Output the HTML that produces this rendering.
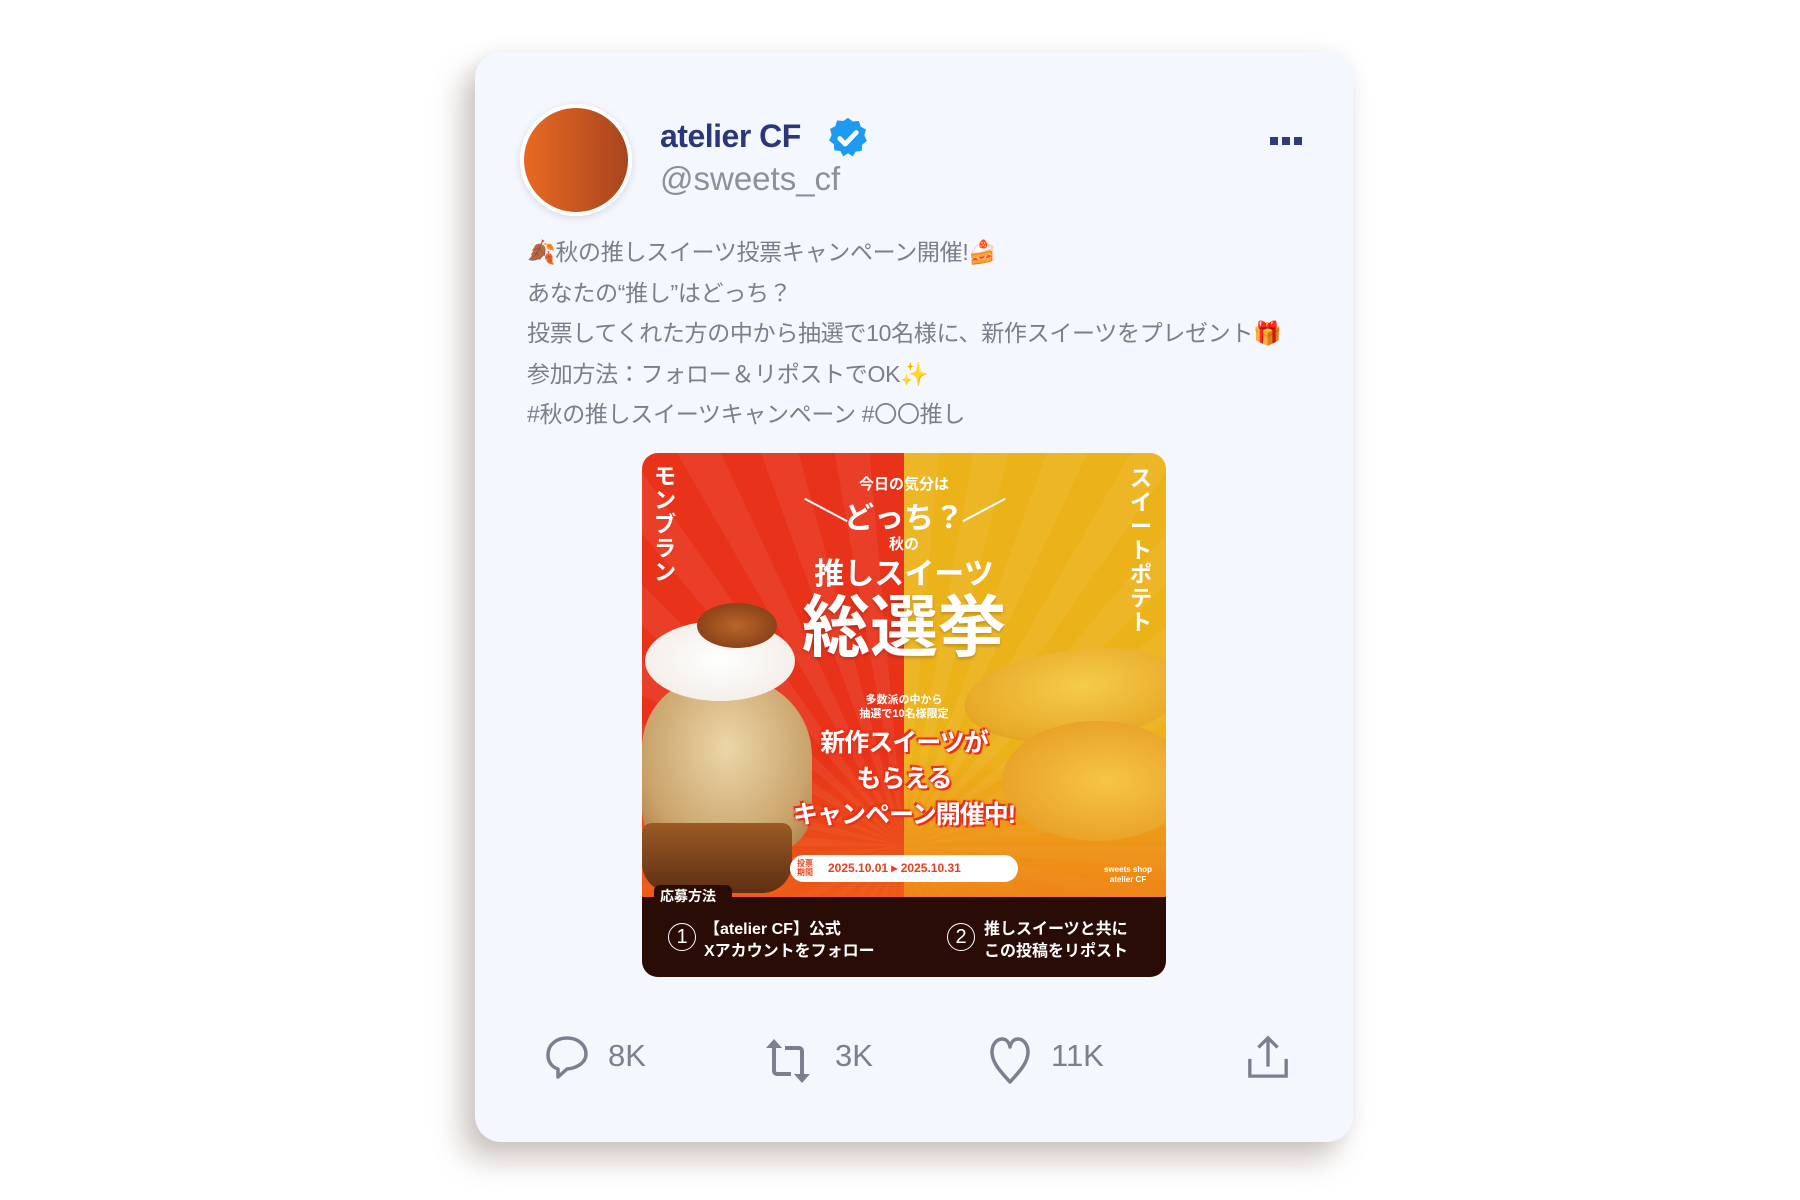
<!DOCTYPE html>
<html><head><meta charset="utf-8"><style>
*{margin:0;padding:0;box-sizing:border-box}
body{width:1800px;height:1200px;background:#fff;position:relative;overflow:hidden;font-family:"Liberation Sans","Noto Sans CJK JP",sans-serif}
.card{position:absolute;left:475px;top:52px;width:878px;height:1090px;background:#f4f7fe;border-radius:26px;box-shadow:-14px 18px 28px rgba(120,100,90,.35),0 0 20px rgba(0,0,0,.06)}
.abs{position:absolute}
.av{left:520px;top:104px;width:112px;height:112px;border-radius:50%;background:linear-gradient(90deg,#e86a22,#a8451f);border:4px solid #fff;box-shadow:0 2px 8px rgba(0,0,0,.12)}
.name{left:660px;top:118px;font-size:32px;font-weight:bold;color:#2b3878;letter-spacing:-.5px}
.handle{left:660px;top:160px;font-size:33px;color:#8d909c;font-weight:300}
.dots{left:1270px;top:132px}
.dots i{display:inline-block;width:8px;height:8px;background:#2e3b80;margin-right:4px}
.txt{left:527px;top:232px;font-size:23px;line-height:40.5px;color:#7b7e8b;letter-spacing:-.3px}
.img{left:642px;top:453px;width:524px;height:524px;border-radius:16px;overflow:hidden;background:linear-gradient(90deg,#e8321a 0 50%,#ecb21a 50%)}
.img .t{position:absolute;color:#fff;font-weight:bold;white-space:nowrap;text-align:center}
.act{top:1038px;font-size:31px;color:#7c7f90}
</style></head><body>
<div class="card"></div>
<div class="abs av"></div>
<div class="abs name">atelier CF</div>
<svg class="abs" style="left:826px;top:116px" width="44" height="44" viewBox="0 0 24 24"><path fill="#1d9bf0" d="M12 1l2.6 2 3.3-.3 1 3.1 2.9 1.6-.9 3.2 1.4 3-2.6 2.1-.2 3.3-3.3.4L14.6 22 12 20.3 9.4 22l-1.6-2.9-3.3-.4-.2-3.3L1.7 13.3l1.4-3-.9-3.2 2.9-1.6 1-3.1 3.3.3z"/><path d="M7.5 12.3l3 3 6-6.3" stroke="#fff" stroke-width="2.6" fill="none" stroke-linecap="round" stroke-linejoin="round"/></svg>
<div class="abs handle">@sweets_cf</div>
<div class="abs dots"><i></i><i></i><i></i></div>
<div class="abs txt">🍂秋の推しスイーツ投票キャンペーン開催!🍰<br>あなたの“推し”はどっち？<br>投票してくれた方の中から抽選で10名様に、新作スイーツをプレゼント🎁<br>参加方法：フォロー＆リポストでOK✨<br>#秋の推しスイーツキャンペーン #〇〇推し</div>

<div class="abs img">
 <div style="position:absolute;inset:0;background:repeating-conic-gradient(from 0deg at 50% 75%,rgba(255,255,255,.06) 0 5deg,rgba(0,0,0,0) 5deg 10deg)"></div>
 <div style="position:absolute;left:0;right:0;top:300px;height:150px;background:linear-gradient(180deg,rgba(240,110,20,0),rgba(240,110,20,.7))"></div>
 <div style="position:absolute;left:0;top:225px;width:170px;height:175px;border-radius:40% 45% 25% 25%;background:radial-gradient(ellipse at 50% 40%,#ecd6a8,#c9a26a 70%,#a5753e)"></div>
 <div style="position:absolute;left:0;top:370px;width:150px;height:70px;border-radius:10px 10px 30px 30px;background:linear-gradient(#9a5a25,#5e2f12)"></div>
 <div style="position:absolute;left:3px;top:168px;width:150px;height:80px;border-radius:50%;background:radial-gradient(#fff,#efe8e0)"></div>
 <div style="position:absolute;left:55px;top:150px;width:80px;height:45px;border-radius:50%;background:radial-gradient(#b8652a,#7a3512)"></div>
 <div style="position:absolute;left:322px;top:198px;width:215px;height:90px;border-radius:50% 40% 45% 50%;background:radial-gradient(ellipse at 55% 40%,#f5cc4a,#e8a928 70%,#c77a1c);transform:rotate(-6deg)"></div>
 <div style="position:absolute;left:360px;top:268px;width:190px;height:120px;border-radius:50%;background:radial-gradient(ellipse at 55% 50%,#f7c545,#e9a42a 70%,#c77a1c)"></div>
 <div class="t" style="left:10px;top:12px;width:26px;font-size:22px;line-height:24px;white-space:normal">モンブラン</div>
 <div class="t" style="left:486px;top:14px;width:26px;font-size:22px;line-height:24px;white-space:normal">スイートポテト</div>
 <div class="t" style="left:0;width:524px;top:20px;font-size:15px">今日の気分は</div>
 <div class="t" style="left:0;width:524px;top:40px;font-size:30px">どっち？</div>
 <div style="position:absolute;left:160px;top:56px;width:48px;height:2px;background:#fff;transform:rotate(28deg)"></div>
 <div style="position:absolute;left:318px;top:56px;width:48px;height:2px;background:#fff;transform:rotate(-28deg)"></div>
 <div class="t" style="left:0;width:524px;top:80px;font-size:15px">秋の</div>
 <div class="t" style="left:0;width:524px;top:96px;font-size:30px">推しスイーツ</div>
 <div class="t" style="left:0;width:524px;top:138px;font-size:68px;line-height:74px;text-shadow:0 2px 3px rgba(0,0,0,.2)">総選挙</div>
 <div class="t" style="left:0;width:524px;top:240px;font-size:11px;line-height:14px">多数派の中から<br>抽選で10名様限定</div>
 <div class="t" style="left:0;width:524px;top:272px;font-size:25px;line-height:36px;letter-spacing:-1px;text-shadow:0 0 3px #e8321a,0 0 3px #e8321a,2px 2px 0 #e8321a,-2px -2px 0 #e8321a">新作スイーツが<br>もらえる<br>キャンペーン開催中!</div>
 <div style="position:absolute;left:148px;top:402px;width:228px;height:27px;border-radius:14px;background:#fff;color:#e8401a;font-weight:bold;font-size:12px;line-height:27px;padding-left:38px">2025.10.01 ▸ 2025.10.31</div>
 <div style="position:absolute;left:155px;top:406px;color:#e8401a;font-size:8px;line-height:9px;font-weight:bold">投票<br>期間</div>
 <div class="t" style="left:462px;top:412px;font-size:8px;line-height:10px">sweets shop<br>atelier CF</div>
 <div style="position:absolute;left:0;top:444px;width:524px;height:80px;background:#2a0c06"></div>
 <div style="position:absolute;left:12px;top:432px;width:78px;height:22px;background:#2a0c06;border-radius:6px"></div>
 <div class="t" style="left:18px;top:433px;font-size:14px">応募方法</div>
 <div style="position:absolute;left:26px;top:470px;width:28px;height:28px;border:1.5px solid #fff;border-radius:50%;color:#fff;font-size:20px;text-align:center;line-height:26px">1</div>
 <div style="position:absolute;left:305px;top:470px;width:28px;height:28px;border:1.5px solid #fff;border-radius:50%;color:#fff;font-size:20px;text-align:center;line-height:26px">2</div>
 <div class="t" style="left:62px;top:466px;font-size:16px;line-height:22px;text-align:left">【atelier CF】公式<br>Xアカウントをフォロー</div>
 <div class="t" style="left:342px;top:466px;font-size:16px;line-height:22px;text-align:left">推しスイーツと共に<br>この投稿をリポスト</div>
</div>

<svg class="abs" style="left:542px;top:1034px" width="50" height="50" viewBox="0 0 50 50" fill="none" stroke="#7c7f90" stroke-width="3.5" stroke-linejoin="round"><path d="M25 4C14 4 6 11 6 21c0 7 4 12 10 14v8l9-8C36 34 44 28 44 20 44 11 36 4 25 4z"/></svg>
<div class="abs act" style="left:608px">8K</div>
<svg class="abs" style="left:760px;top:1038px" width="56" height="46" viewBox="0 0 56 46" fill="#7c7f90"><path d="M12 10v23a5 5 0 005 5h14v-4H17a1 1 0 01-1-1V10h6L14 1 6 10z"/><path d="M44 36V13a5 5 0 00-5-5H25v4h14a1 1 0 011 1v23h-6l8 9 8-9z"/></svg>
<div class="abs act" style="left:835px">3K</div>
<svg class="abs" style="left:987px;top:1036px" width="46" height="52" viewBox="0 0 46 52" fill="none" stroke="#7c7f90" stroke-width="3.5" stroke-linejoin="round"><path d="M23 46C12 34 5 26 5 16 5 8 10 3 15 3c4 0 7 3 8 8 1-5 4-8 8-8 5 0 10 5 10 13 0 10-7 18-18 30z"/></svg>
<div class="abs act" style="left:1051px">11K</div>
<svg class="abs" style="left:1246px;top:1034px" width="44" height="46" viewBox="0 0 46 48" fill="none" stroke="#7c7f90" stroke-width="3.5"><path d="M23 34V4M13 14L23 4l10 10"/><path d="M4 26v18h38V26"/></svg>
</body></html>
